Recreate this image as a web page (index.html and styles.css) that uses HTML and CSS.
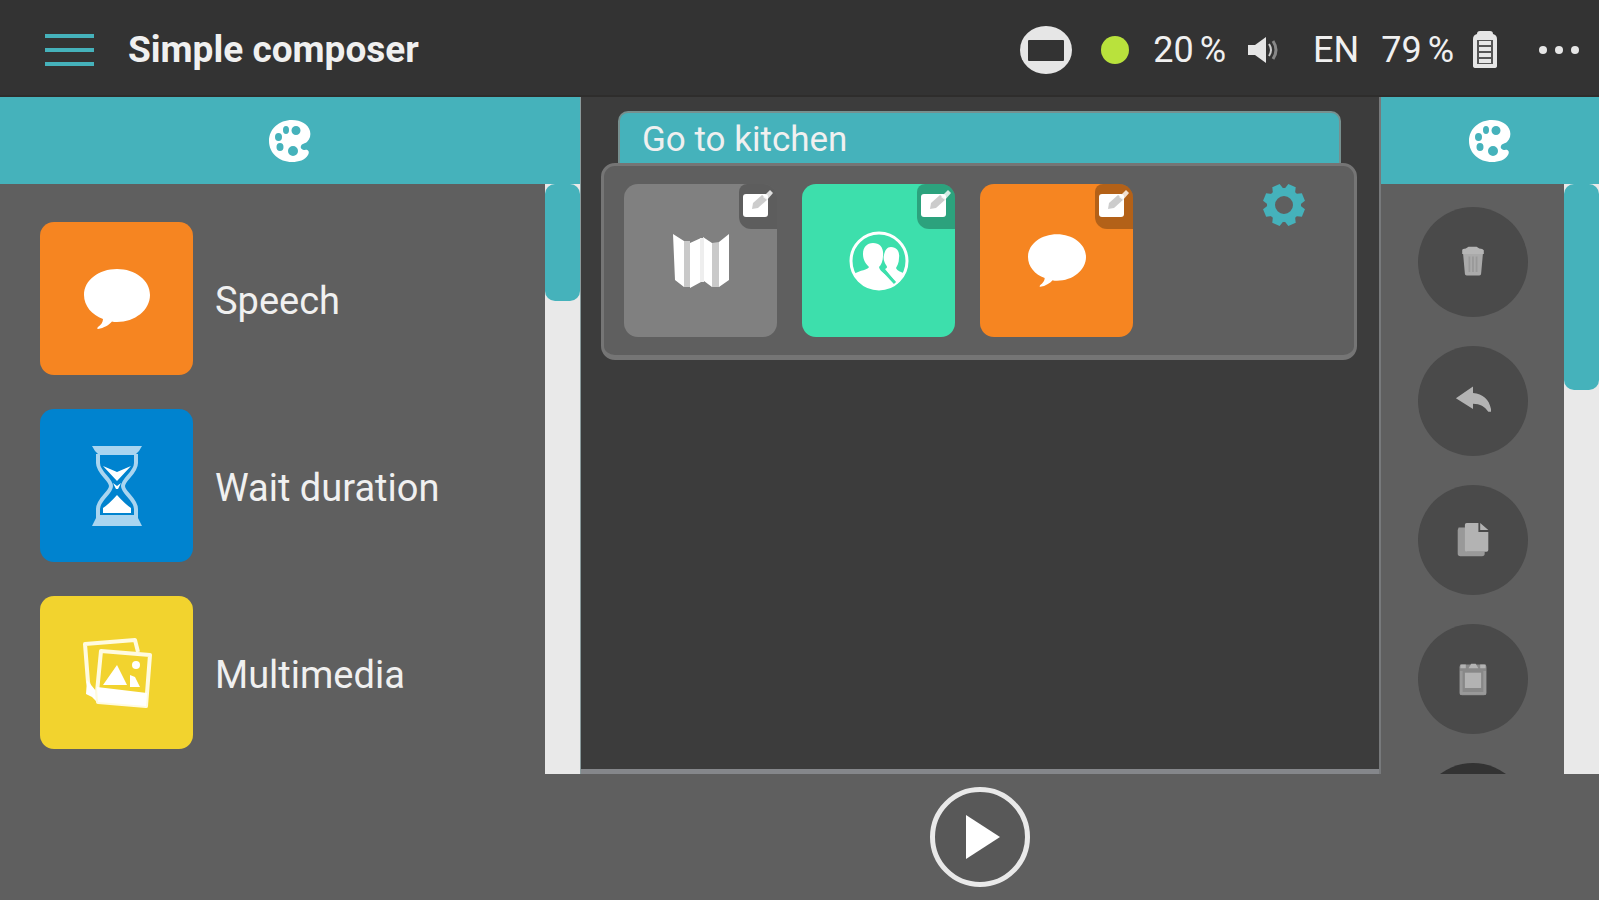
FILE: index.html
```html
<!DOCTYPE html>
<html lang="en">
<head>
<meta charset="utf-8">
<title>Simple composer</title>
<link rel="stylesheet" href="styles.css">
</head>
<body>
<svg class="defs" aria-hidden="true">
  <symbol id="palette" viewBox="0 0 42 42">
    <path fill="#fff" fill-rule="evenodd" d="M23 0C10 0 0 9 0 21s10 21 23 21c7 0 13-2 16-7 2-3 0-6-3-5-3 0-5-2-4-4 1-3 4-2 6-4 3-3 4-7 3-11C39 4 32 0 23 0ZM17 6a3 4 0 1 1 0 8 3 4 0 0 1 0-8ZM27 6a4 4 0 1 1 0 9 4 4 0 0 1 0-9ZM9.500 13a3.500 4 0 1 1 0 8 3.500 4 0 0 1 0-8ZM11 23a3.500 4 0 1 1 0 8 3.500 4 0 0 1 0-8ZM24 26a5 5 0 1 1 0 10 5 5 0 0 1 0-10Z"/>
  </symbol>
  <symbol id="bubble" viewBox="0 0 66 60">
    <path fill="#fff" d="M33 0C51 0 66 11 66 26S51 53 33 53c-2 0-4 0-5-.500C25 56 20 59 14 60c-1 0-1-1 0-2 3-2 5-5 5-8C8 46 0 37 0 26 0 11 15 0 33 0Z"/>
  </symbol>
  <symbol id="edit" viewBox="0 0 30 28">
    <rect x="0" y="4" width="25" height="23" rx="3" fill="#fff"/>
    <path d="m9 19 1-6L19 5l6 4-10 9Z" fill="#000" opacity=".2"/>
    <path d="m20 7 7-7 3 3-6 7Z" fill="#fff" opacity=".8"/>
  </symbol>
</svg>

<header class="topbar">
  <button class="icon-button menu" aria-label="Menu"><span></span><span></span><span></span></button>
  <h1 class="title">Simple composer</h1>
  <div class="status">
    <svg class="stop" viewBox="0 0 52 48" aria-hidden="true"><ellipse cx="26" cy="24" rx="26" ry="24" fill="#e6e6e6"/><rect x="8" y="14" width="36" height="21" rx="1" fill="#333"/></svg>
    <span class="online"></span>
    <span class="value volume-value">20<span class="percent">%</span></span>
    <svg class="volume" viewBox="0 0 30 28" aria-hidden="true"><path fill="#e6e6e6" d="M0 9h7L18 1v26L7 19H0Z"/><path d="M21 8q4 6 0 12" stroke="#ccc" stroke-width="2" fill="none"/><path d="M25 5q6 9 0 18" stroke="#888" stroke-width="3" fill="none"/></svg>
    <span class="value language">EN</span>
    <span class="value">79<span class="percent">%</span></span>
    <svg class="battery" viewBox="0 0 26 38" aria-hidden="true"><path d="M8 0h10q3 0 3 3 4 1 4 5v27q0 2-3 2H4q-3 0-3-2V8q0-4 4-5 0-3 3-3Z" fill="#e6e6e6"/><path d="M5 9h16v24H5Z" fill="#555"/><path d="M7 12h12M7 18h12M7 24h12M7 30h12" stroke="#e6e6e6" stroke-width="4"/></svg>
    <button class="icon-button more" aria-label="More"><svg viewBox="0 0 42 10" aria-hidden="true"><g fill="#e6e6e6"><circle cx="5" cy="5" r="4"/><circle cx="21" cy="5" r="4"/><circle cx="37" cy="5" r="4"/></g></svg></button>
  </div>
</header>

<main class="workspace">
  <section class="panel library">
    <div class="panel-head"><svg class="palette"><use href="#palette"/></svg></div>
    <div class="panel-body">
      <ul class="blocks">
        <li><button class="block"><span class="tile orange"><svg class="big-bubble"><use href="#bubble"/></svg></span><span class="block-name">Speech</span></button></li>
        <li><button class="block"><span class="tile blue">
          <svg class="hourglass" viewBox="0 0 50 80" aria-hidden="true">
            <path fill="#a9d5f0" d="M0 0h50l-3 5-4 4H7L3 5ZM0 80l4-8h42l4 8ZM4 69h42v6H4Z"/>
            <path fill="none" stroke="#a9d5f0" stroke-width="4" d="M6 8v9c0 10 13 16 13 23S6 53 6 63v9M44 8v9c0 10-13 16-13 23s13 13 13 23v9"/>
            <path fill="#fff" d="m11 20 14 6 14-6-14 15ZM11 67v-5q6-4 14-13 8 9 14 13v5Z"/>
            <path fill="#fff" d="m21 37 4 3 4-3-3 6h-2Z"/>
          </svg></span><span class="block-name">Wait duration</span></button></li>
        <li><button class="block"><span class="tile yellow">
          <svg class="photos" viewBox="0 0 70 72" aria-hidden="true">
            <path fill="none" stroke="#fffbe0" stroke-width="4" stroke-linejoin="round" d="M56 15 53 3 3 7l3 38 3 12"/>
            <path fill="#fff" d="M5 43 14 54l50 4 1 12-50-5-5-5-6-3Z"/>
            <path fill="#f2d32e" stroke="#fffbe0" stroke-width="4" stroke-linejoin="round" d="m19 14 49 4-4 51-48-4-1-10Z"/>
            <path fill="#fff" d="m15 50 50 6-1 13-48-4Z"/>
            <path fill="#fff" d="m21 48 14-20 10 20ZM48 38l5 2 5 10H48Z"/>
            <circle cx="54" cy="28" r="4" fill="#fff"/>
          </svg></span><span class="block-name">Multimedia</span></button></li>
      </ul>
      <div class="track"><div class="thumb thumb-short"></div></div>
    </div>
  </section>

  <section class="canvas">
    <article class="sequence">
      <h2 class="sequence-title">Go to kitchen</h2>
      <div class="sequence-body">
        <div class="tile gray">
          <svg class="map" viewBox="0 0 56 54" aria-hidden="true">
            <path fill="#fff" d="m0 0 11 7v46L2 46ZM28 4v44l-11 6V9ZM30 3l9 6v44l-8-6ZM56 0v46l-10 7V8Z"/>
            <path fill="#c9c9c9" d="M11 7h6v46h-6ZM39 9l7-1v45h-7Z"/><path fill="#eee" d="M27 4h4v44h-4Z"/>
          </svg>
          <button class="edit" aria-label="Edit move"><svg><use href="#edit"/></svg></button>
        </div>
        <div class="tile green">
          <svg class="people" viewBox="0 0 60 60" aria-hidden="true">
            <circle cx="30" cy="30" r="28" fill="none" stroke="#fff" stroke-width="3"/>
            <path fill="#fff" d="M24 12c7 0 11 5 10 13 0 5-2 9-4 11 1 6 9 7 16 16q-7 6-16 6T9 50l-4-7c6-4 14-4 15-7-3-3-6-7-6-13 0-7 4-11 10-11Z"/>
            <path fill="#fff" d="M42 16c6 0 9 5 8 11 0 5-2 8-3 10 1 3 6 4 9 6l-8 10-12-15c3-1 2-3 1-4-2-3-3-7-2-10 1-5 3-8 7-8Z"/>
            <path d="m34 39 12 13" stroke="#3ddfac" stroke-width="3"/>
          </svg>
          <button class="edit" aria-label="Edit people"><svg><use href="#edit"/></svg></button>
        </div>
        <div class="tile orange">
          <svg class="bubble"><use href="#bubble"/></svg>
          <button class="edit" aria-label="Edit speech"><svg><use href="#edit"/></svg></button>
        </div>
        <button class="icon-button settings" aria-label="Settings">
          <svg viewBox="-21 -21 42 42" aria-hidden="true">
            <circle r="13" fill="none" stroke="#45b2bb" stroke-width="8"/>
            <g fill="#45b2bb"><path id="tooth" d="M-6-14-4-21H4L6-14Z" transform="rotate(22.500)"/><use href="#tooth" transform="rotate(45)"/><use href="#tooth" transform="rotate(90)"/><use href="#tooth" transform="rotate(135)"/><use href="#tooth" transform="rotate(180)"/><use href="#tooth" transform="rotate(225)"/><use href="#tooth" transform="rotate(270)"/><use href="#tooth" transform="rotate(315)"/></g>
          </svg>
        </button>
      </div>
    </article>
  </section>

  <section class="panel tools">
    <div class="panel-head"><svg class="palette"><use href="#palette"/></svg></div>
    <div class="panel-body">
      <div class="tool-list">
        <button class="tool" aria-label="Delete"><svg viewBox="0 0 40 40" aria-hidden="true"><path fill="#b5b5b5" d="M8 7q0-2 4-2l3-2h9l3 2q4 0 5 2v4H8Z"/><path fill="#aaa" d="M9 11h22l-2 22q0 2-2 2H13q-2 0-2-2Z"/><path stroke="#999" stroke-width="2" d="M16 14v17M20 14v17M24 14v17"/></svg></button>
        <button class="tool" aria-label="Undo"><svg viewBox="0 0 40 40" aria-hidden="true"><path fill="#b3b3b3" d="M1 17 20 4v7c11 1 18 7 20 18v3h-3c-4-6-9-9-17-9v6Z"/></svg></button>
        <button class="tool" aria-label="Copy"><svg viewBox="0 0 40 40" aria-hidden="true"><path fill="#999" d="M4 6h9v27h20v2q0 3-3 3H6q-3 0-3-3V9Z"/><path fill="#b3b3b3" d="M13 1h13v10h11v20q0 2-2 2H13q-2 0-2-2V3q0-2 2-2ZM28 1l9 8h-9Z"/></svg></button>
        <button class="tool" aria-label="Paste"><svg viewBox="0 0 40 40" aria-hidden="true"><rect x="5" y="4" width="30" height="34" rx="3" fill="#888"/><path stroke="#999" stroke-width="3" fill="none" d="M7 11v25h26V11"/><rect x="11" y="13" width="18" height="17" fill="#b3b3b3"/><path fill="#b3b3b3" d="M6 4h6v4H6ZM15 8l3-5h5l3 5ZM28 4h6v4h-6Z"/></svg></button>
        <button class="tool tool-dark" aria-label="Next tool"></button>
      </div>
      <div class="track"><div class="thumb thumb-long"></div></div>
    </div>
  </section>
</main>

<footer class="controls">
  <button class="play" aria-label="Play"><svg viewBox="0 0 34 44" aria-hidden="true"><path fill="#fff" d="M0 0 34 22 0 44Z"/></svg></button>
</footer>
</body>
</html>
```
FILE: styles.css
```css
:root {
  --teal: #45b2bb;
  --panel: #5f5f5f;
  --columns: 581px minmax(0, 1fr) 220px;
}

* { box-sizing: border-box; }

body {
  margin: 0;
  height: 100vh;
  display: flex;
  flex-direction: column;
  overflow: hidden;
  background: var(--panel);
  color: #f0f0f0;
  font-family: Roboto, "Liberation Sans", sans-serif;
  font-size: 38px;
}

button {
  border: 0;
  padding: 0;
  background: none;
  color: inherit;
  font: inherit;
  cursor: pointer;
}

svg { display: block; }
.defs { position: absolute; width: 0; height: 0; }

.topbar {
  flex: none;
  height: 97px;
  display: flex;
  align-items: center;
  padding: 5px 19px 0 45px;
  background: #333;
  border-bottom: 2px solid #2e2d2c;
}

.menu {
  width: 49px;
  display: flex;
  flex-direction: column;
  gap: 10px;
}
.menu span { height: 4px; background: var(--teal); }

.title {
  margin: 0 0 0 34px;
  font-size: 37px;
  font-weight: 700;
  line-height: 48px;
}

.status {
  margin-left: auto;
  display: flex;
  align-items: center;
  font-size: 36px;
}
.stop { width: 52px; height: 48px; }
.online {
  width: 28px;
  height: 28px;
  margin: 0 24px 0 29px;
  border-radius: 50%;
  background: #b9e23c;
}
.value { display: flex; align-items: center; gap: 6px; }
.volume { width: 30px; height: 28px; margin: 0 35px 0 22px; }
.language { margin-right: 22px; }
.battery { width: 26px; height: 38px; margin: 0 40px 0 18px; }
.more svg { width: 42px; height: 10px; }

.workspace {
  flex: 1;
  min-height: 0;
  display: grid;
  grid-template-columns: var(--columns);
  background: #3c3c3c;
}

.panel {
  min-height: 0;
  display: flex;
  flex-direction: column;
  background: var(--panel);
}
.library { border-right: 1px solid #8a9a9c; }
.tools { border-left: 2px solid #77797b; }

.panel-head {
  flex: none;
  height: 87px;
  display: flex;
  align-items: center;
  justify-content: center;
  background: var(--teal);
}
.palette { width: 42px; height: 42px; }

.panel-body {
  flex: 1;
  min-height: 0;
  display: flex;
  overflow: hidden;
}

.blocks {
  flex: 1;
  display: flex;
  flex-direction: column;
  gap: 34px;
  margin: 0;
  padding: 38px 0 0 40px;
  list-style: none;
}
.block {
  display: flex;
  align-items: center;
  gap: 22px;
  line-height: 48px;
}
.block-name { padding-top: 4px; }

.tile {
  position: relative;
  width: 153px;
  height: 153px;
  display: flex;
  align-items: center;
  justify-content: center;
  border-radius: 14px;
}
.orange { background: #f68521; }
.blue { background: #0083cf; }
.yellow { background: #f2d32e; }
.gray { background: #808080; }
.green { background: #3ddfac; }

.big-bubble { width: 66px; height: 60px; }
.bubble { width: 58px; height: 53px; }
.hourglass { width: 50px; height: 80px; }
.photos { width: 70px; height: 72px; }
.map { width: 56px; height: 54px; }
.people { width: 60px; height: 60px; }

.track {
  flex: none;
  width: 35px;
  background: #e9e9e9;
}
.thumb { border-radius: 10px; background: var(--teal); }
.thumb-short { height: 117px; }
.thumb-long { height: 206px; }

.canvas {
  padding: 14px 22px 0 20px;
  border-bottom: 5px solid #85878b;
}

.sequence-title {
  margin: 0 16px 0 17px;
  padding: 4px 22px 0;
  border: 2px solid #77908f;
  border-width: 2px 2px 0;
  border-radius: 10px 10px 0 0;
  background: var(--teal);
  font-size: 35px;
  font-weight: 400;
  line-height: 46px;
}

.sequence-body {
  display: flex;
  gap: 25px;
  padding: 18px 49px 18px 20px;
  border: 3px solid #757575;
  border-bottom-width: 5px;
  border-radius: 14px;
  background: var(--panel);
}

.edit {
  position: absolute;
  top: 0;
  right: 0;
  width: 38px;
  height: 45px;
  padding: 6px 4px;
  display: flex;
  align-items: flex-start;
  border-radius: 8px 14px 0 12px;
  background: rgb(0 0 0 / 27%);
}
.edit svg { width: 30px; height: 28px; }

.settings { align-self: flex-start; margin-left: auto; line-height: 0; }
.settings svg { width: 42px; height: 42px; }

.tool-list {
  flex: 1;
  display: flex;
  flex-direction: column;
  align-items: center;
  gap: 29px;
  padding-top: 23px;
}
.tool {
  flex: none;
  width: 110px;
  height: 110px;
  display: flex;
  align-items: center;
  justify-content: center;
  border-radius: 50%;
  background: #4a4a4a;
}
.tool svg { width: 36px; height: 36px; }
.tool-dark { background: #333; }

.controls {
  flex: none;
  height: 126px;
  display: grid;
  grid-template-columns: var(--columns);
  align-items: center;
}
.play {
  grid-column: 2;
  justify-self: center;
  width: 100px;
  height: 100px;
  display: flex;
  align-items: center;
  justify-content: center;
  padding-left: 6px;
  border: 5px solid #e9e9e9;
  border-radius: 50%;
  background: #585858;
}
.play svg { width: 34px; height: 44px; }
```
